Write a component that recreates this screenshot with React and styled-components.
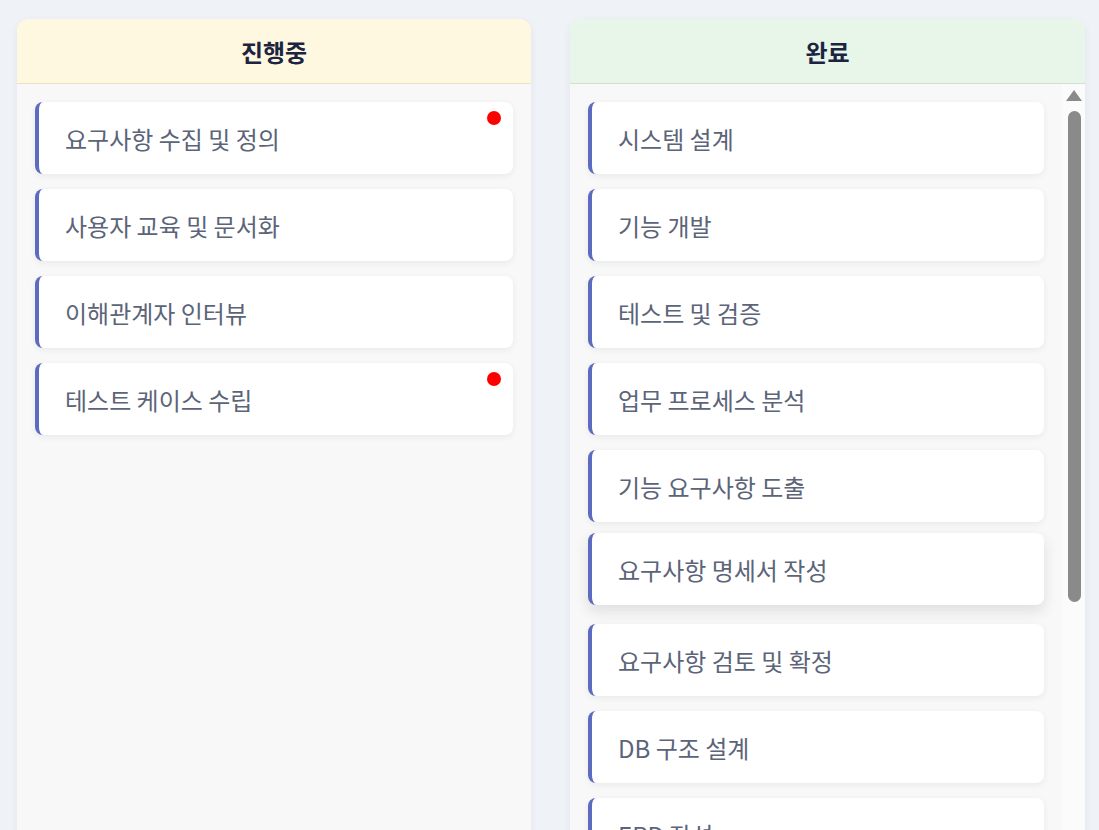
import React from "react";
import styled, { createGlobalStyle, css } from "styled-components";

const GlobalStyle = createGlobalStyle`
  html, body {
    margin: 0;
    padding: 0;
    background: #eff3f8;
    font-family: "Noto Sans CJK KR", "Noto Sans", sans-serif;
    overflow: hidden;
  }
`;

const Board = styled.div`
  display: flex;
  align-items: flex-start;
  gap: 39px;
  padding: 19px 14px 0 17px;
  height: 100vh;
  box-sizing: border-box;
  overflow: hidden;
`;

const Column = styled.section`
  width: ${(p) => p.$width}px;
  flex: none;
  height: 900px;
  display: flex;
  flex-direction: column;
  background: #f8f8f8;
  border-radius: 12px;
  box-shadow: 0 2px 8px rgba(30, 40, 60, 0.06);
  overflow: hidden;
`;

const Header = styled.header`
  flex: none;
  height: 64px;
  display: flex;
  align-items: center;
  justify-content: center;
  background: ${(p) => p.$bg};
  border-bottom: 1px solid ${(p) => p.$line};
  font-size: 24px;
  font-weight: 700;
  color: #1c2440;
`;

const ListArea = styled.div`
  position: relative;
  flex: 1;
  min-height: 0;
  display: flex;
  flex-direction: column;
`;

const CardList = styled.div`
  flex: 1;
  min-height: 0;
  display: flex;
  flex-direction: column;
  gap: 15px;
  padding: 18px ${(p) => (p.$scroll ? 41 : 18)}px 18px 18px;
  overflow: hidden;
`;

const ScrollBar = styled.div`
  position: absolute;
  top: 0;
  right: 0;
  bottom: 0;
  width: 23px;
  background: #fbfbfb;
  display: flex;
  flex-direction: column;
  align-items: center;
  padding: 6px 0 0 1px;
  box-sizing: border-box;
`;

const ScrollArrow = styled.div`
  width: 0;
  height: 0;
  border-left: 8px solid transparent;
  border-right: 8px solid transparent;
  border-bottom: 11px solid #8a8a8a;
`;

const ScrollThumb = styled.div`
  margin-top: 10px;
  width: 13px;
  height: 491px;
  border-radius: 7px;
  background: #8a8a8a;
`;

const Card = styled.div`
  position: relative;
  flex: none;
  height: 72px;
  box-sizing: border-box;
  display: flex;
  align-items: center;
  padding: 0 26px;
  background: #ffffff;
  border-left: 4px solid #5c6bc0;
  border-radius: 8px;
  box-shadow: 0 2px 6px rgba(30, 40, 60, 0.07);
  font-size: 24px;
  color: #5b6478;
  white-space: nowrap;
  ${(p) =>
    p.$lifted &&
    css`
      transform: translateY(-4px);
      box-shadow: 0 6px 14px rgba(30, 40, 60, 0.12);
    `}
`;

const Dot = styled.span`
  position: absolute;
  top: 9px;
  right: 12px;
  width: 14px;
  height: 14px;
  border-radius: 50%;
  background: #ff0000;
`;

const inProgress = [
  { title: "요구사항 수집 및 정의", alert: true },
  { title: "사용자 교육 및 문서화" },
  { title: "이해관계자 인터뷰" },
  { title: "테스트 케이스 수립", alert: true },
];

const done = [
  { title: "시스템 설계" },
  { title: "기능 개발" },
  { title: "테스트 및 검증" },
  { title: "업무 프로세스 분석" },
  { title: "기능 요구사항 도출" },
  { title: "요구사항 명세서 작성", lifted: true },
  { title: "요구사항 검토 및 확정" },
  { title: "DB 구조 설계" },
  { title: "ERD 작성" },
  { title: "화면 설계" },
  { title: "API 설계" },
  { title: "프로토타입 제작" },
  { title: "코드 리뷰" },
  { title: "배포 준비" },
  { title: "운영 매뉴얼 작성" },
];

function TaskCard({ task }) {
  return (
    <Card $lifted={task.lifted}>
      {task.title}
      {task.alert && <Dot />}
    </Card>
  );
}

export default function App() {
  return (
    <>
      <GlobalStyle />
      <Board>
        <Column $width={514}>
          <Header $bg="#fff8e1" $line="#ebe2c6">진행중</Header>
          <ListArea>
            <CardList>
              {inProgress.map((t) => (
                <TaskCard key={t.title} task={t} />
              ))}
            </CardList>
          </ListArea>
        </Column>
        <Column $width={515}>
          <Header $bg="#e8f5e9" $line="#d0e1d1">완료</Header>
          <ListArea>
            <CardList $scroll>
              {done.map((t) => (
                <TaskCard key={t.title} task={t} />
              ))}
            </CardList>
            <ScrollBar>
              <ScrollArrow />
              <ScrollThumb />
            </ScrollBar>
          </ListArea>
        </Column>
      </Board>
    </>
  );
}
